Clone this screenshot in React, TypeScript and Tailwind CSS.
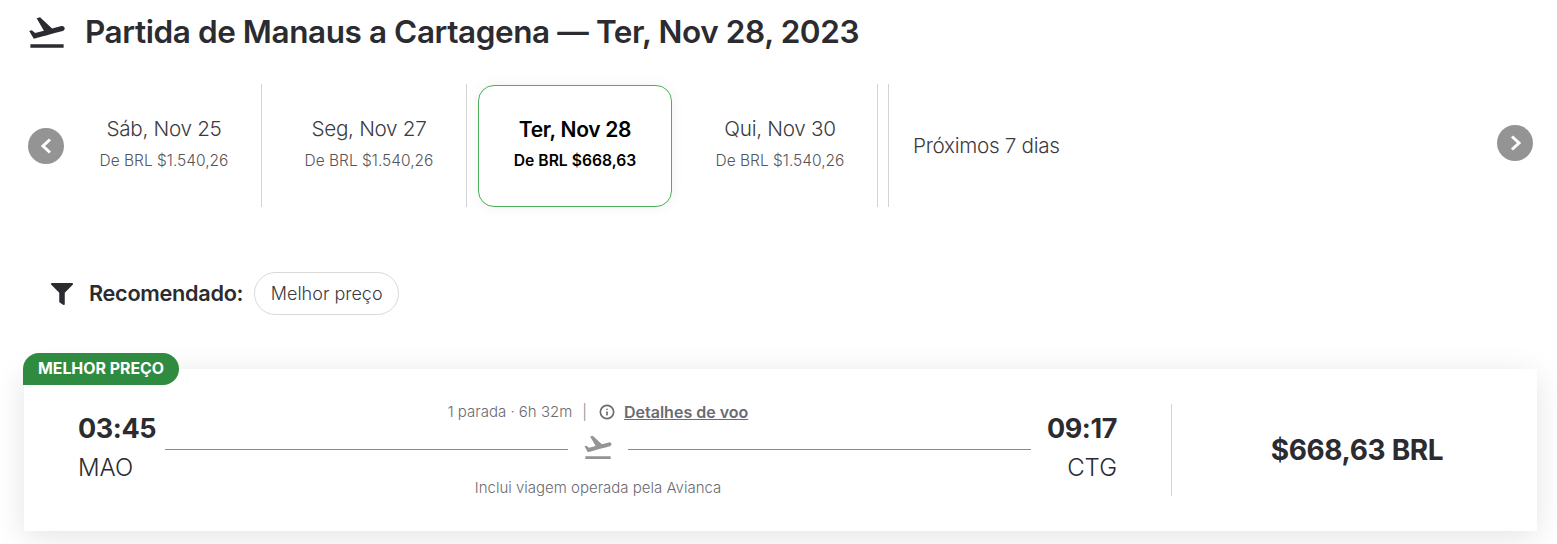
import { Info } from "lucide-react";
import { FaFilter } from "react-icons/fa";
import { MdFlightTakeoff } from "react-icons/md";

const dates = [
  { label: "Sáb, Nov 25", price: "De BRL $1.540,26", gap: "ml-0" },
  { label: "Seg, Nov 27", price: "De BRL $1.540,26", gap: "ml-[10px]" },
  { label: "Ter, Nov 28", price: "De BRL $668,63", gap: "ml-[11px]", active: true },
  { label: "Qui, Nov 30", price: "De BRL $1.540,26", gap: "ml-[11px]" },
];

const App = () => {
  return (
    <div className="w-[1557px] h-[544px] overflow-hidden bg-white text-[#2b2b30] font-['Inter',sans-serif]">
      {/* Title */}
      <div className="flex items-center h-[64px] pl-[26px]">
        <MdFlightTakeoff className="w-[42px] h-[42px] text-[#2b2b30]" />
        <h1 className="ml-[17px] text-[31.5px] font-semibold tracking-[-0.42px]">
          Partida de Manaus a Cartagena — Ter, Nov 28, 2023
        </h1>
      </div>

      {/* Date carousel */}
      <div className="flex items-center h-[123px] mt-[20px] px-[24px]">
        <button className="w-[36px] h-[36px] ml-[4px] shrink-0 rounded-full bg-[#949494] flex items-center justify-center">
          <svg viewBox="0 0 36 36" className="w-[36px] h-[36px]" fill="none" stroke="white" strokeWidth={3}>
            <polyline points="22,11.5 15,18 22,24.5" />
          </svg>
        </button>
        <div className="flex h-full ml-[3px] flex-1">
          {dates.map((d) =>
            d.active ? (
              <div
                key={d.label}
                className={`w-[194px] ${d.gap} mt-[1px] rounded-[16px] border border-[#4caf5a] bg-white shadow-[0_0_14px_rgba(0,0,0,0.06)] flex flex-col items-center pt-[30px] text-black`}
              >
                <div className="text-[21px] font-semibold tracking-[-0.3px] leading-[28px]">{d.label}</div>
                <div className="mt-[6px] text-[15.7px] font-semibold leading-[22px]">{d.price}</div>
              </div>
            ) : (
              <div
                key={d.label}
                className={`w-[194px] ${d.gap} flex flex-col items-center pt-[31px] border-r border-[#d4d4d4] box-content`}
              >
                <div className="text-[20.7px] font-light tracking-[-0.3px] leading-[28px] text-[#3b3b3f]">{d.label}</div>
                <div className="mt-[7px] text-[15.5px] font-light leading-[22px] text-[#55555a]">{d.price}</div>
              </div>
            )
          )}
          <div className="flex-1 ml-[10px] border-l border-[#d4d4d4] flex items-center pl-[24px] text-[20.7px] font-light tracking-[-0.3px] text-[#3b3b3f]">
            Próximos 7 dias
          </div>
        </div>
        <button className="w-[36px] h-[36px] mb-[6px] shrink-0 rounded-full bg-[#949494] flex items-center justify-center">
          <svg viewBox="0 0 36 36" className="w-[36px] h-[36px]" fill="none" stroke="white" strokeWidth={3}>
            <polyline points="15,11.5 22,18 15,24.5" />
          </svg>
        </button>
      </div>

      {/* Filter */}
      <div className="flex items-center mt-[65px] pl-[51px] h-[43px]">
        <FaFilter className="w-[22px] h-[22px] text-[#2b2b30]" />
        <span className="ml-[16px] text-[21.7px] font-semibold tracking-[-0.3px]">Recomendado:</span>
        <span className="ml-[11px] h-[43px] w-[145px] rounded-full border border-[#d9d9d9] flex items-center justify-center text-[18px] font-light text-[#3b3b3f]">
          Melhor preço
        </span>
      </div>

      {/* Flight card */}
      <div className="relative mt-[54px] mx-[24px] w-[1513px] h-[162px] bg-white shadow-[0_6px_30px_rgba(0,0,0,0.11)] flex items-center">
        <div className="absolute left-[-1px] top-[-16px] h-[32px] w-[156px] rounded-tl-[16px] rounded-r-[16px] bg-[#2e8b3f] text-white text-[15.9px] font-bold flex items-center justify-center">
          MELHOR PREÇO
        </div>
        <div className="flex flex-1 pl-[54px] pr-[54px] items-center">
          <div className="w-[87px] mb-[6px] flex flex-col">
            <span className="text-[27px] font-bold leading-[34px] tracking-[-0.4px]">03:45</span>
            <span className="mt-[7px] text-[24px] font-light leading-[30px]">MAO</span>
          </div>
          <div className="flex-1 flex flex-col items-center">
            <div className="flex items-center text-[15px] font-light text-[#6b6b70] h-[24px]">
              <span>1 parada · 6h 32m</span>
              <span className="ml-[10px] mr-[12px] text-[#8a8a8a]">|</span>
              <Info className="w-[16px] h-[16px]" strokeWidth={2.5} />
              <span className="ml-[9px] text-[16px] font-semibold underline">Detalhes de voo</span>
            </div>
            <div className="w-full flex items-center h-[50px]">
              <div className="flex-1 h-px bg-[#8a8a8a]" />
              <MdFlightTakeoff className="w-[32px] h-[32px] mx-[14px] mb-[4px] text-[#949494]" />
              <div className="flex-1 h-px bg-[#8a8a8a]" />
            </div>
            <div className="mt-[2px] text-[15px] font-light text-[#6b6b70] leading-[24px]">Inclui viagem operada pela Avianca</div>
          </div>
          <div className="w-[86px] mb-[6px] flex flex-col items-end">
            <span className="text-[27px] font-bold leading-[34px] tracking-[-0.4px]">09:17</span>
            <span className="mt-[7px] text-[24px] font-light leading-[30px]">CTG</span>
          </div>
        </div>
        <div className="w-[366px] h-[92px] pl-[5px] border-l border-[#d4d4d4] flex items-center justify-center text-[28px] font-bold tracking-[-0.35px]">
          $668,63 BRL
        </div>
      </div>
    </div>
  );
};

export default App;
